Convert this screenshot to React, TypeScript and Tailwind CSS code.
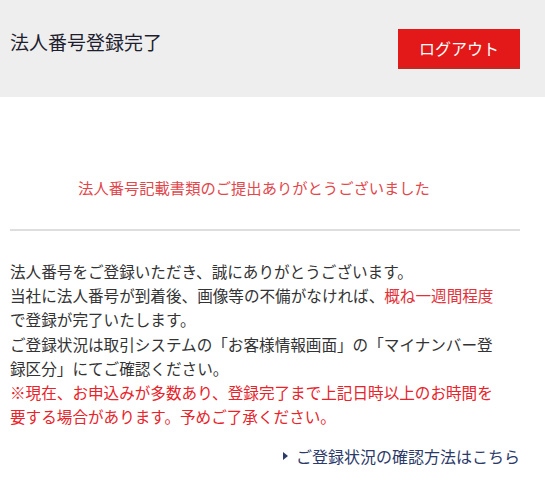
import React from "react";

export default function App() {
  const font = { fontFamily: '"Noto Sans CJK JP", "Noto Sans", sans-serif' };
  return (
    <div className="w-[545px] min-h-[499px] bg-white font-['Noto_Sans_CJK_JP',sans-serif]" style={font}>
      <header className="h-[97px] bg-[#eeeeee] pl-[10px] pr-[25px] pt-[28px] flex justify-between items-start">
        <h1 className="text-[19px] leading-[28px] text-[#1e1e2e] font-normal">法人番号登録完了</h1>
        <button className="mt-[1px] w-[122px] h-[40px] bg-[#e31919] border-b-2 border-[#c02a22] text-white text-[16px] leading-[38px] text-center">
          ログアウト
        </button>
      </header>
      <main className="pl-[10px] pr-[25px]">
        <p className="mt-[78px] text-center pr-[22px] text-[15.3px] leading-[24px] text-[#e2474c]">
          法人番号記載書類のご提出ありがとうございました
        </p>
        <div className="mt-[30px] h-[2px] bg-[#dedede]" />
        <div className="mt-[28px] text-[15.6px] leading-[24.2px] text-[#333333] whitespace-nowrap">
          <p>法人番号をご登録いただき、誠にありがとうございます。</p>
          <p>
            当社に法人番号が到着後、画像等の不備がなければ、<span className="text-[#e3313a]">概ね一週間程度</span>
            <br />
            で登録が完了いたします。
          </p>
          <p>
            ご登録状況は取引システムの「お客様情報画面」の「マイナンバー登
            <br />
            録区分」にてご確認ください。
          </p>
          <p className="text-[#e8232a]">
            ※現在、お申込みが多数あり、登録完了まで上記日時以上のお時間を
            <br />
            要する場合があります。予めご了承ください。
          </p>
        </div>
        <div className="mt-[16px] flex justify-end">
          <a href="#" className="flex items-center gap-[8px] text-[16px] leading-[24px] text-[#2c3a6a]">
            <span className="w-0 h-0 border-y-[4.5px] border-y-transparent border-l-[5px] border-l-[#2c3a6a]" />
            ご登録状況の確認方法はこちら
          </a>
        </div>
      </main>
    </div>
  );
}
